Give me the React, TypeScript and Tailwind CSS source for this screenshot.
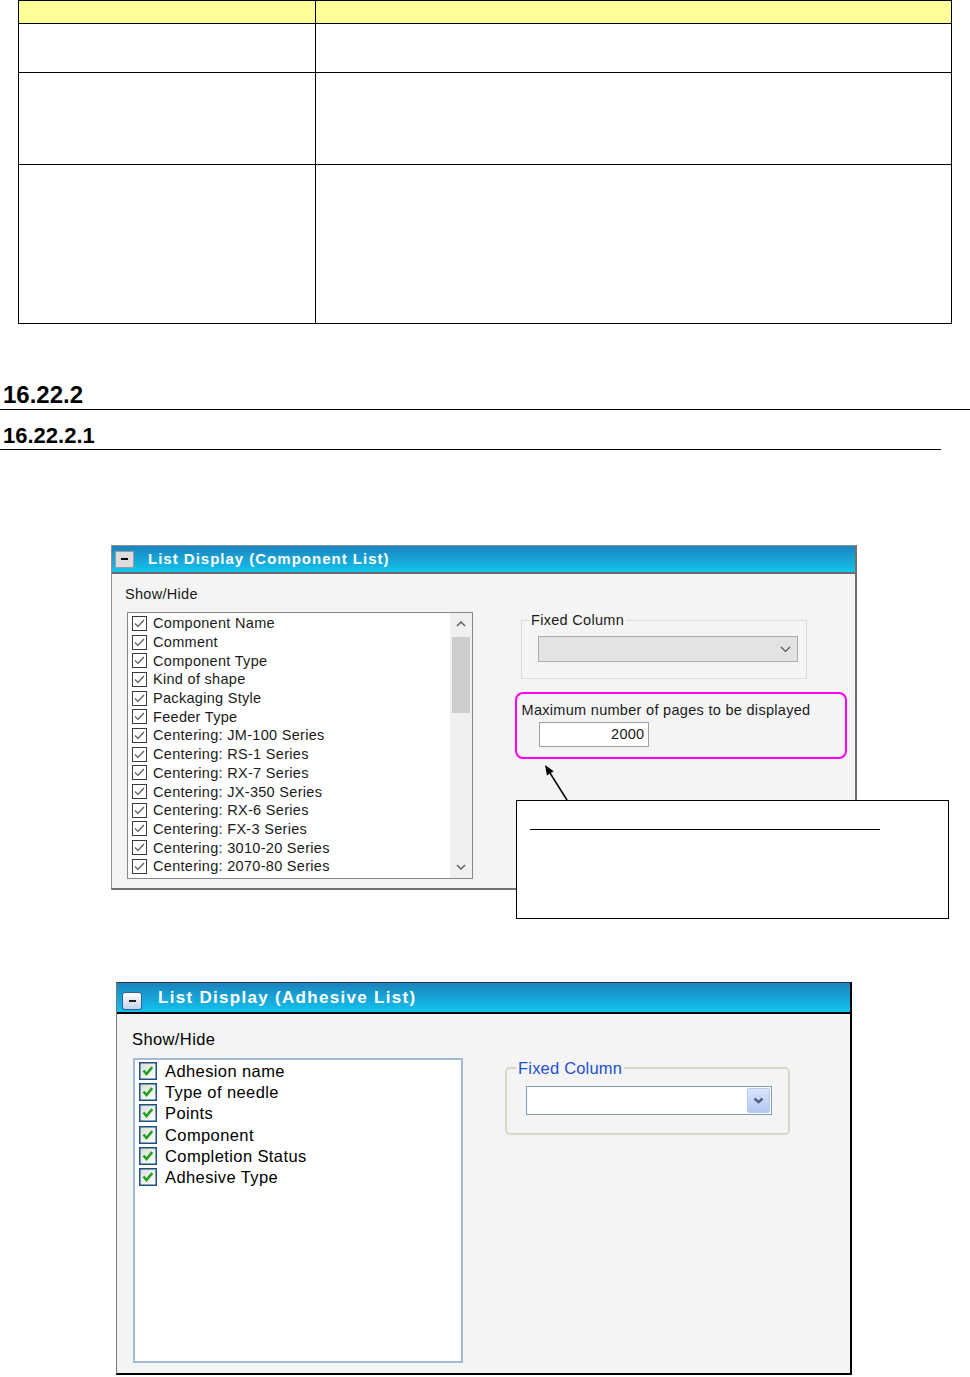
import React from "react";

const list1 = [
  "Component Name",
  "Comment",
  "Component Type",
  "Kind of shape",
  "Packaging Style",
  "Feeder Type",
  "Centering: JM-100 Series",
  "Centering: RS-1 Series",
  "Centering: RX-7 Series",
  "Centering: JX-350 Series",
  "Centering: RX-6 Series",
  "Centering: FX-3 Series",
  "Centering: 3010-20 Series",
  "Centering: 2070-80 Series",
];

const list2 = [
  "Adhesion name",
  "Type of needle",
  "Points",
  "Component",
  "Completion Status",
  "Adhesive Type",
];

function Check1() {
  return (
    <svg width="15" height="15" viewBox="0 0 15 15" className="shrink-0">
      <rect x="0.5" y="0.5" width="14" height="14" fill="#fff" stroke="#3c3c3c" />
      <path d="M3 7.5 L6 10.5 L12 4" fill="none" stroke="#555" strokeWidth="1.2" />
    </svg>
  );
}

function Check2() {
  return (
    <svg width="18" height="18" viewBox="0 0 18 18" className="shrink-0">
      <defs>
        <linearGradient id="cb2" x1="0" y1="0" x2="1" y2="1">
          <stop offset="0" stopColor="#dcdcd6" />
          <stop offset="1" stopColor="#ffffff" />
        </linearGradient>
      </defs>
      <rect x="0.75" y="0.75" width="16.5" height="16.5" fill="url(#cb2)" stroke="#1c5180" strokeWidth="1.5" />
      <path d="M4.5 8.5 L7.5 12 L13.2 5.2" fill="none" stroke="#21a121" strokeWidth="2.6" />
    </svg>
  );
}

export default function App() {
  return (
    <div className="relative w-[970px] h-[1377px] bg-white font-['Liberation_Sans',Arial,sans-serif] text-black overflow-hidden">
      {/* Table */}
      <div className="ml-[18px] w-[934px] border-l border-t border-black">
        <div className="flex h-[23px] border-b border-black bg-[#ffff99]">
          <div className="w-[297px] border-r border-black" />
          <div className="w-[636px] border-r border-black" />
        </div>
        <div className="flex h-[49px] border-b border-black">
          <div className="w-[297px] border-r border-black" />
          <div className="w-[636px] border-r border-black" />
        </div>
        <div className="flex h-[92px] border-b border-black">
          <div className="w-[297px] border-r border-black" />
          <div className="w-[636px] border-r border-black" />
        </div>
        <div className="flex h-[159px] border-b border-black">
          <div className="w-[297px] border-r border-black" />
          <div className="w-[636px] border-r border-black" />
        </div>
      </div>

      {/* Headings */}
      <div className="mt-[59px] w-[970px] border-b border-black pb-[2px] pl-[3px] text-[24px] leading-[24px] font-bold">
        16.22.2
      </div>
      <div className="mt-[15px] w-[941px] border-b border-black pb-[2px] pl-[3px] text-[22px] leading-[22px] font-bold">
        16.22.2.1
      </div>

      {/* Dialog 1 */}
      <div className="mt-[95px] ml-[111px] w-[746px] border-l border-t border-[#8f8f8f] border-r-2 border-b-2 border-r-[#707070] border-b-[#707070] bg-[#f4f4f4]">
        <div className="flex h-[28px] items-center border-b-2 border-[#6b6b6b] bg-linear-to-b from-[#1a84bd] to-[#10c3ee] pl-[3px]">
          <div className="flex h-[17px] w-[19px] items-center justify-center border border-[#9a9a9a] bg-[#dcdcdc]">
            <div className="h-[2px] w-[7px] bg-black" />
          </div>
          <div className="ml-[14px] text-[15px] font-bold tracking-[1px] text-white leading-[20px]">
            List Display (Component List)
          </div>
        </div>
        <div className="flex pt-[11px] pb-[9px] pl-[13px] text-[14.5px] tracking-[0.3px]">
          <div className="flex flex-col">
            <div className="leading-[18px] text-[#1a1a1a]">Show/Hide</div>
            <div className="ml-[2px] mt-[9px] flex h-[267px] w-[346px] border border-[#828790] bg-white">
              <div className="flex-1 pl-[4px] pt-[1px]">
                {list1.map((t) => (
                  <div key={t} className="flex h-[18.7px] items-center">
                    <Check1 />
                    <span className="ml-[6px] whitespace-nowrap leading-[18px] text-[#1a1a1a]">{t}</span>
                  </div>
                ))}
              </div>
              <div className="flex w-[22px] flex-col items-center bg-[#f0f0f0]">
                <div className="flex h-[22px] w-full items-center justify-center">
                  <svg width="10" height="6" viewBox="0 0 10 6">
                    <path d="M1 5 L5 1 L9 5" fill="none" stroke="#606060" strokeWidth="1.5" />
                  </svg>
                </div>
                <div className="mt-[2px] h-[76px] w-[18px] bg-[#cdcdcd]" />
                <div className="flex-1" />
                <div className="flex h-[22px] w-full items-center justify-center">
                  <svg width="10" height="6" viewBox="0 0 10 6">
                    <path d="M1 1 L5 5 L9 1" fill="none" stroke="#606060" strokeWidth="1.5" />
                  </svg>
                </div>
              </div>
            </div>
          </div>
          <div className="ml-[42px] mt-[26px] flex flex-col">
            <fieldset className="ml-[6px] h-[68px] w-[286px] border border-[#dcdcdc] p-0">
              <legend className="ml-[7px] px-[2px] leading-[18px] text-[#1a1a1a]">Fixed Column</legend>
              <div className="ml-[16px] mt-[7px] flex h-[26px] w-[260px] items-center justify-end border border-[#adadad] bg-[#e3e3e3] pr-[6px]">
                <svg width="11" height="7" viewBox="0 0 11 7">
                  <path d="M1 1 L5.5 5.5 L10 1" fill="none" stroke="#555" strokeWidth="1.2" />
                </svg>
              </div>
            </fieldset>
            <div className="mt-[13px] h-[67px] w-[332px] rounded-[8px] border-[2.5px] border-[#ff00ff] pl-[4.5px] pt-[7px]">
              <div className="leading-[18px] whitespace-nowrap text-[#1a1a1a]">Maximum number of pages to be displayed</div>
              <div className="ml-[17px] mt-[3px] flex h-[25px] w-[110px] items-center justify-end border border-[#a0a0a0] bg-white pr-[3px] text-[#1a1a1a]">
                2000
              </div>
            </div>
          </div>
        </div>
      </div>

      {/* Dialog 2 */}
      <div className="mt-[92px] ml-[116px] w-[736px] border-l border-t border-l-[#7a7a7a] border-t-[#333] border-r-2 border-b-2 border-r-black border-b-black bg-[#f4f4f4]">
        <div className="flex h-[31px] items-center border-b-2 border-black bg-linear-to-b from-[#1a84bd] to-[#10c3ee] pl-[5px]">
          <div className="mt-[6px] flex h-[18px] w-[20px] items-center justify-center rounded-[3px] border border-[#3a5c9a] bg-linear-to-b from-[#ffffff] to-[#c5d3ee]">
            <div className="h-[2px] w-[7px] bg-[#222]" />
          </div>
          <div className="ml-[16px] mt-[1px] text-[17px] font-bold tracking-[1.3px] text-white leading-[22px]">
            List Display (Adhesive List)
          </div>
        </div>
        <div className="flex pt-[15px] pb-[10px] pl-[15px] text-[16.5px] tracking-[0.4px]">
          <div className="flex flex-col">
            <div className="leading-[20px]">Show/Hide</div>
            <div className="ml-[1px] mt-[9px] h-[305px] w-[330px] border-2 border-[#a3b9d5] bg-white pl-[4px]">
              {list2.map((t) => (
                <div key={t} className="flex h-[21.3px] items-center">
                  <Check2 />
                  <span className="ml-[8px] whitespace-nowrap leading-[20px]">{t}</span>
                </div>
              ))}
            </div>
          </div>
          <div className="ml-[42px] mt-[29px]">
            <fieldset className="h-[77px] w-[285px] rounded-[5px] border-2 border-[#d8d8c8] p-0">
              <legend className="ml-[9px] px-[2px] leading-[20px] text-[#1f4fd0] tracking-[0.2px]">Fixed Column</legend>
              <div className="ml-[19px] mt-[8px] flex h-[29px] w-[246px] items-center justify-end border border-[#7f9db9] bg-white pr-[1px]">
                <div className="flex h-[25px] w-[23px] items-center justify-center rounded-[2px] border border-[#b6c9f2] bg-linear-to-b from-[#d9e5fd] to-[#b2c7f4]">
                  <svg width="11" height="7" viewBox="0 0 11 7">
                    <path d="M1.5 1.5 L5.5 5.2 L9.5 1.5" fill="none" stroke="#4d6185" strokeWidth="2.4" />
                  </svg>
                </div>
              </div>
            </fieldset>
          </div>
        </div>
      </div>

      {/* Callout arrow */}
      <svg className="absolute left-[535px] top-[760px]" width="40" height="45" viewBox="0 0 40 45">
        <line x1="32" y1="40" x2="15" y2="13" stroke="#000" strokeWidth="1.5" />
        <polygon points="10,5 18.7,11.3 11.9,15.6" fill="#000" />
      </svg>
      {/* Callout box */}
      <div className="absolute left-[516px] top-[800px] h-[119px] w-[433px] border border-black bg-white pt-[28px] pl-[13px]">
        <div className="h-px w-[350px] bg-black" />
      </div>
    </div>
  );
}
